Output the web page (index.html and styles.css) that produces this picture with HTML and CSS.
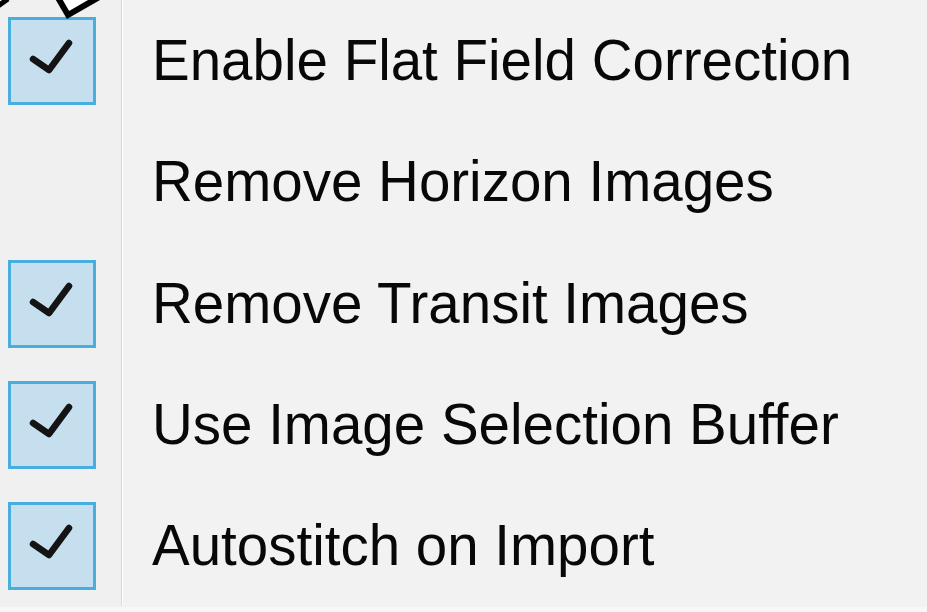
FILE: index.html
```html
<!DOCTYPE html>
<html>
<head>
<meta charset="utf-8">
<link rel="stylesheet" href="styles.css">
</head>
<body>
<div class="menu">
  <div class="item">
    <div class="icon"><span class="check"><svg viewBox="0 0 82 82" width="82" height="82"><path d="M22 39 L38 50 L58 23" /></svg></span></div>
    <div class="label">Enable Flat Field Correction</div>
  </div>
  <div class="item">
    <div class="icon"></div>
    <div class="label">Remove Horizon Images</div>
  </div>
  <div class="item">
    <div class="icon"><span class="check"><svg viewBox="0 0 82 82" width="82" height="82"><path d="M22 39 L38 50 L58 23" /></svg></span></div>
    <div class="label">Remove Transit Images</div>
  </div>
  <div class="item">
    <div class="icon"><span class="check"><svg viewBox="0 0 82 82" width="82" height="82"><path d="M22 39 L38 50 L58 23" /></svg></span></div>
    <div class="label">Use Image Selection Buffer</div>
  </div>
  <div class="item">
    <div class="icon"><span class="check"><svg viewBox="0 0 82 82" width="82" height="82"><path d="M22 39 L38 50 L58 23" /></svg></span></div>
    <div class="label">Autostitch on Import</div>
  </div>
  <svg class="cursor" width="110" height="22" viewBox="0 0 110 22">
    <path d="M-2 6 L8 -1" fill="none" stroke="#000" stroke-width="5"/>
    <path d="M57 -4 L68 15 L101 -4" fill="#fff" stroke="#000" stroke-width="6" stroke-linejoin="miter"/>
  </svg>
</div>
</body>
</html>
```
FILE: styles.css
```css
html, body {
  margin: 0;
  padding: 0;
  background: #f7f7f7;
}
.menu {
  position: relative;
  width: 927px;
  height: 607px;
  background: #f2f2f2;
  display: flex;
  flex-direction: column;
  overflow: hidden;
}
.item {
  display: grid;
  grid-template-columns: 121px 1fr;
  height: 121.3px;
  flex: none;
}
.icon {
  display: flex;
  align-items: center;
  padding-left: 8px;
  background: #f0f0f0;
}
.check {
  display: flex;
  width: 88px;
  height: 88px;
  box-sizing: border-box;
  border: 3px solid #48aee0;
  background: #c5dfee;
  margin-top: 1px;
}
.check svg path {
  fill: none;
  stroke: #141414;
  stroke-width: 6.5;
  stroke-linecap: round;
  stroke-linejoin: round;
}
.label {
  display: flex;
  align-items: center;
  padding-left: 30px;
  border-left: 1px solid #d9d9d9;
  box-shadow: inset 1px 0 0 #ffffff;
  font-family: "Liberation Sans", Arial, sans-serif;
  font-size: 56.5px;
  color: #080808;
  white-space: nowrap;
}
.cursor {
  position: absolute;
  left: 0;
  top: 0;
}
```
